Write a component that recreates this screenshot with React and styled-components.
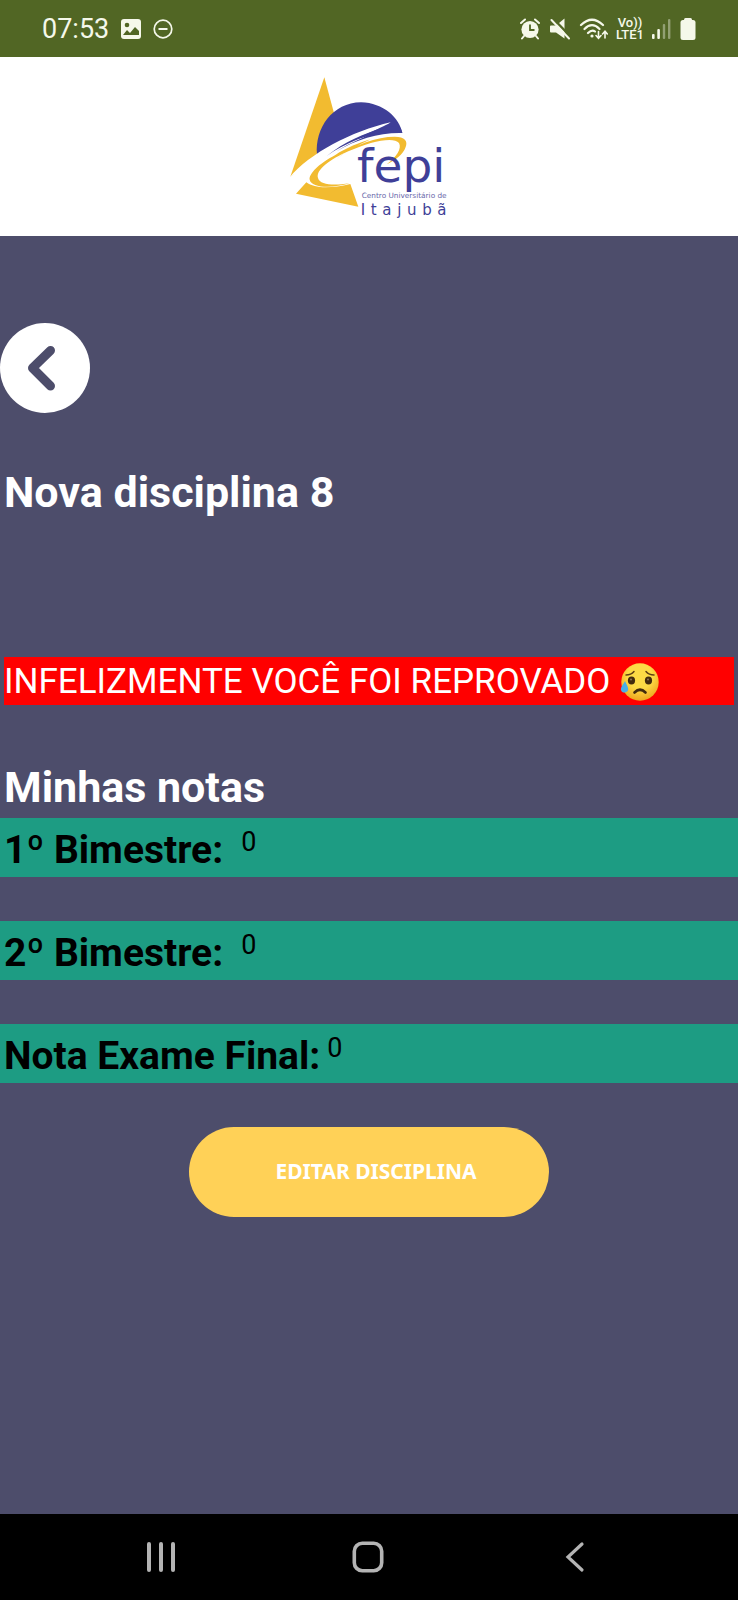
import React from "react";
import styled, { createGlobalStyle } from "styled-components";

const GlobalStyle = createGlobalStyle`
  * { box-sizing: border-box; }
  body { margin: 0; background: #4d4d6b; font-family: Roboto, "Liberation Sans", sans-serif; }
  h1, h2, p, dl, dt, dd { margin: 0; }
  button { border: 0; padding: 0; font: inherit; cursor: pointer; }
  svg { display: block; flex: none; }
`;

const Screen = styled.div`
  display: flex;
  flex-direction: column;
  min-height: 100vh;
`;

const StatusBar = styled.div`
  display: flex;
  justify-content: space-between;
  align-items: center;
  height: 57px;
  padding: 0 42px;
  background: #516624;
  color: #f5f8ea;
`;

const StatusGroup = styled.div`
  display: flex;
  align-items: center;
  gap: ${({ $gap }) => $gap}px;
`;

const Clock = styled.time`
  font-size: 27px;
  line-height: 32px;
`;

const Network = styled.div`
  display: flex;
  flex-direction: column;
  align-items: center;
  font-size: 13px;
  line-height: 12px;
  font-weight: 500;
`;

const Header = styled.header`
  display: flex;
  justify-content: center;
  height: 179px;
  background: #fff;
`;

const Main = styled.main`
  flex: 1;
  display: flex;
  flex-direction: column;
  padding-top: 87px;
  background: #4d4d6b;
`;

const BackButton = styled.button`
  display: grid;
  place-items: center;
  width: 90px;
  height: 90px;
  border-radius: 50%;
  background: #fff;
`;

const Title = styled.h1`
  margin-top: 53px;
  padding: 0 4px;
  font-size: 43px;
  line-height: 52px;
  font-weight: 700;
  color: #fff;
`;

const Banner = styled.p`
  display: flex;
  align-items: center;
  gap: 10px;
  height: 48px;
  margin: 139px 4px 0;
  padding-top: 2px;
  background: #f00;
  color: #fff;
  font-size: 35px;
  line-height: 46px;
`;

const Subtitle = styled.h2`
  margin-top: 56px;
  padding: 0 4px;
  font-size: 43px;
  line-height: 52px;
  font-weight: 700;
  color: #fff;
`;

const Grades = styled.dl`
  display: flex;
  flex-direction: column;
  gap: 44px;
  margin-top: 5px;
`;

const GradeRow = styled.div`
  display: flex;
  align-items: flex-start;
  gap: ${({ $gap }) => $gap}px;
  height: 59px;
  padding: 8px 4px 0;
  background: #1d9c83;
  color: #000;
`;

const GradeLabel = styled.dt`
  font-size: 39px;
  line-height: 48px;
  font-weight: 700;
`;

const GradeValue = styled.dd`
  font-size: 27px;
  line-height: 32px;
`;

const EditButton = styled.button`
  align-self: center;
  width: 360px;
  max-width: 100%;
  height: 90px;
  margin: 44px 0;
  border-radius: 45px;
  background: #ffd157;
  color: #fff;
  && {
    padding: 0 0 2px 14px;
    font-family: "Noto Sans", "Open Sans", sans-serif;
    font-size: 21px;
    font-weight: 700;
  }
`;

const NavBar = styled.nav`
  display: grid;
  grid-template-columns: repeat(3, 1fr);
  height: 86px;
  padding: 0 60px 0 57px;
  background: #000;
`;

const NavButton = styled.button`
  display: grid;
  place-items: center;
  background: transparent;
  color: #b4b4b4;
`;

function PictureIcon() {
  return (
    <svg width="20" height="20" viewBox="0 0 20 20" aria-hidden="true">
      <rect width="20" height="20" rx="3" fill="currentColor" />
      <circle cx="6" cy="6" r="2.3" fill="#516624" />
      <path d="M2 16 L6 11 L9 14 L14 8 L18 12 V16 Z" fill="#516624" />
    </svg>
  );
}

function DoNotDisturbIcon() {
  return (
    <svg width="20" height="20" viewBox="0 0 20 20" fill="none" stroke="currentColor" strokeWidth="1.7" aria-hidden="true">
      <circle cx="10" cy="10" r="8.8" />
      <path d="M5.5 10H14.5" strokeWidth="2" />
    </svg>
  );
}

function AlarmIcon() {
  return (
    <svg width="22" height="22" viewBox="0 0 22 22" aria-hidden="true">
      <circle cx="10" cy="11.5" r="8.6" fill="currentColor" />
      <path d="M1 5 L5 1.5 M19 5 L15 1.5 M4 18 L2 20.5 M16 18 L18 20.5" stroke="currentColor" strokeWidth="2" strokeLinecap="round" />
      <path d="M10 6.5V12H14.5" fill="none" stroke="#516624" strokeWidth="1.8" />
    </svg>
  );
}

function MuteIcon() {
  return (
    <svg width="20" height="22" viewBox="0 0 20 22" aria-hidden="true">
      <path d="M1 7.5H6L14.5 0.5V20.5L6 14.5H1Q0 14.5 0 13.5V8.5Q0 7.5 1 7.5Z" fill="currentColor" />
      <path d="M3 0.5 L21.5 19.5" stroke="#516624" strokeWidth="2.4" />
      <path d="M1.5 2 L19 20.5" stroke="currentColor" strokeWidth="2" strokeLinecap="round" />
    </svg>
  );
}

function WifiIcon() {
  return (
    <svg width="30" height="22" viewBox="-2 0 30 22" fill="none" stroke="currentColor" strokeWidth="2.2" strokeLinecap="round" aria-hidden="true">
      <path d="M1 7 Q12 -3.5 23 7 M4.5 11 Q12 3.5 19.5 11 M8 15 Q12 11 15 13.5" />
      <circle cx="12" cy="18" r="1.6" fill="currentColor" stroke="none" />
      <path d="M18.5 13.5V20 M16 17.5L18.5 20.3L21 17.5 M25 20V13.5 M22.5 16L25 13.2L27.3 16" strokeWidth="1.6" />
    </svg>
  );
}

function SignalIcon() {
  return (
    <svg width="20" height="22" viewBox="0 0 20 22" fill="currentColor" aria-hidden="true">
      <rect x="0" y="16" width="2.6" height="5" rx="1" />
      <rect x="5.3" y="11" width="2.6" height="10" rx="1" />
      <rect x="10.8" y="6" width="2.4" height="15" rx="1" opacity="0.4" />
      <rect x="16" y="1" width="2.4" height="20" rx="1" opacity="0.4" />
    </svg>
  );
}

function BatteryIcon() {
  return (
    <svg width="16" height="24" viewBox="0 0 16 24" fill="currentColor" aria-hidden="true">
      <rect x="4" y="1" width="8" height="6" rx="1.5" />
      <rect x="0.5" y="3" width="15" height="20" rx="2.5" />
    </svg>
  );
}

function FepiLogo() {
  return (
    <svg width="200" height="179" viewBox="-3 -18 600 537" role="img" aria-label="fepi Centro Universitário de Itajubá">
      <path d="M163 43 L200 180 L146 275 L61 341 Z" fill="#f2bb30" />
      <path d="M141 275 C134 195 188 119 273 118 C340 120 388 163 398 213 C300 210 220 235 141 275 Z" fill="#3f3f98" />
      <path d="M58 344 C120 270 245 205 362 178 C330 200 245 225 170 279 C260 215 350 202 402 210 L412 350 L240 361 C190 378 130 376 84 360 L104 340 C83 329 76 329 58 344 Z" fill="#fff" />
      <path d="M170 279 C226 238 285 224 338 194 C282 212 224 235 170 279 Z" fill="#3f3f98" />
      <path d="M338 194 C290 222 238 238 200 265 C260 228 330 208 397 210 L392 195 Q368 188 338 194 Z" fill="#3f3f98" />
      <path d="M196 291 C250 243 322 221 374 221 C405 221 414 235 407 252 C400 274 375 292 350 304 C380 282 396 256 387 240 C371 220 302 235 235 265 C181 289 137 320 144 345 C150 366 190 368 239 361 C182 378 124 374 119 350 C116 333 146 302 196 276 C228 255 270 238 302 229 C264 246 228 265 196 291 Z" fill="#f2bb30" />
      <path d="M109 358 C135 378 185 376 241 363 L265 431 L78 392 Z" fill="#f2bb30" />
      <text x="261" y="356" fontFamily="DejaVu Sans, sans-serif" fontSize="141" fill="#3f3f98">fepi</text>
      <text x="275" y="406" fontFamily="DejaVu Sans, sans-serif" fontSize="22" fill="#6868aa">Centro Universitário de</text>
      <text x="272" y="455" fontFamily="DejaVu Sans, sans-serif" fontSize="45" letterSpacing="17" fill="#3f3f98">Itajubã</text>
    </svg>
  );
}

function SadFace() {
  return (
    <svg width="40" height="40" viewBox="0 0 40 40" role="img" aria-label="Rosto triste mas aliviado">
      <defs>
        <radialGradient id="face" cx="50%" cy="35%" r="65%">
          <stop offset="0.5" stopColor="#fddb45" />
          <stop offset="1" stopColor="#eea51e" />
        </radialGradient>
      </defs>
      <circle cx="20" cy="20" r="18.7" fill="url(#face)" />
      <path d="M6 13 Q11 13 14 9.5 M26 9.5 Q29 13 34 13" fill="none" stroke="#604014" strokeWidth="1.5" strokeLinecap="round" />
      <ellipse cx="11.5" cy="18.5" rx="3.6" ry="3.9" fill="#422b0d" />
      <ellipse cx="28.5" cy="18.5" rx="3.6" ry="3.9" fill="#422b0d" />
      <circle cx="11" cy="17.5" r="1" fill="#8c7458" />
      <circle cx="28" cy="17.5" r="1" fill="#8c7458" />
      <path d="M14.5 30.5 Q20 25 25.5 30.5" fill="none" stroke="#422b0d" strokeWidth="2.6" strokeLinecap="round" />
      <path d="M5 19 C3 23 0.5 25 1 28 C2 32 8.5 31 8.2 27 C8 24 6 22 5 19 Z" fill="#48aee8" />
    </svg>
  );
}

const grades = [
  { label: "1º Bimestre:", value: 0, gap: 18 },
  { label: "2º Bimestre:", value: 0, gap: 18 },
  { label: "Nota Exame Final:", value: 0, gap: 7 },
];

export default function App() {
  return (
    <Screen>
      <GlobalStyle />
      <StatusBar>
        <StatusGroup $gap={12}>
          <Clock>07:53</Clock>
          <PictureIcon />
          <DoNotDisturbIcon />
        </StatusGroup>
        <StatusGroup $gap={8}>
          <AlarmIcon />
          <MuteIcon />
          <WifiIcon />
          <Network>
            <span>Vo))</span>
            <span>LTE1</span>
          </Network>
          <SignalIcon />
          <BatteryIcon />
        </StatusGroup>
      </StatusBar>
      <Header>
        <FepiLogo />
      </Header>
      <Main>
        <BackButton type="button" aria-label="Voltar">
          <svg width="90" height="90" viewBox="0 0 90 90" fill="none" stroke="#4d4d6b" strokeWidth="9" strokeLinecap="round" strokeLinejoin="round" aria-hidden="true">
            <path d="M50.5 27.5 L32.5 45 L50.5 63" />
          </svg>
        </BackButton>
        <Title>Nova disciplina 8</Title>
        <Banner>
          INFELIZMENTE VOCÊ FOI REPROVADO
          <SadFace />
        </Banner>
        <Subtitle>Minhas notas</Subtitle>
        <Grades>
          {grades.map((grade) => (
            <GradeRow key={grade.label} $gap={grade.gap}>
              <GradeLabel>{grade.label}</GradeLabel>
              <GradeValue>{grade.value}</GradeValue>
            </GradeRow>
          ))}
        </Grades>
        <EditButton type="button">EDITAR DISCIPLINA</EditButton>
      </Main>
      <NavBar aria-label="Sistema">
        <NavButton type="button" aria-label="Recentes">
          <svg width="30" height="32" viewBox="0 0 30 32" stroke="currentColor" strokeWidth="4" strokeLinecap="round" aria-hidden="true">
            <path d="M3 3V29 M15 3V29 M27 3V29" />
          </svg>
        </NavButton>
        <NavButton type="button" aria-label="Início">
          <svg width="32" height="32" viewBox="0 0 32 32" fill="none" stroke="currentColor" strokeWidth="3.6" aria-hidden="true">
            <rect x="2.3" y="2.3" width="27.4" height="27.4" rx="8" />
          </svg>
        </NavButton>
        <NavButton type="button" aria-label="Voltar">
          <svg width="20" height="32" viewBox="0 0 20 32" fill="none" stroke="currentColor" strokeWidth="3.2" strokeLinecap="round" aria-hidden="true">
            <path d="M17 3 L3 16 L17 29" />
          </svg>
        </NavButton>
      </NavBar>
    </Screen>
  );
}
